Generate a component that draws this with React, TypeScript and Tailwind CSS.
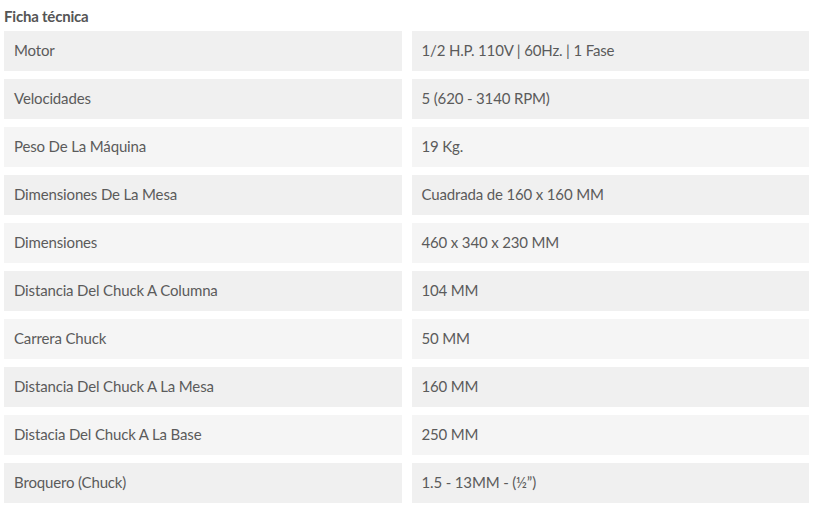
const rows: [string, string][] = [
  ["Motor", "1/2 H.P. 110V | 60Hz. | 1 Fase"],
  ["Velocidades", "5 (620 - 3140 RPM)"],
  ["Peso De La Máquina", "19 Kg."],
  ["Dimensiones De La Mesa", "Cuadrada de 160 x 160 MM"],
  ["Dimensiones", "460 x 340 x 230 MM"],
  ["Distancia Del Chuck A Columna", "104 MM"],
  ["Carrera Chuck", "50 MM"],
  ["Distancia Del Chuck A La Mesa", "160 MM"],
  ["Distacia Del Chuck A La Base", "250 MM"],
  ["Broquero (Chuck)", "1.5 - 13MM - (½”)"],
];

function App() {
  return (
    <div className="min-h-screen bg-white px-1 text-[15px] text-[#5b5b5b] font-['Lato',sans-serif]">
      <h3 className="h-[31px] pt-[5px] text-[15px] font-bold leading-[22px] text-[#555] tracking-[-0.2px]">
        Ficha técnica
      </h3>
      <div className="grid grid-cols-2 gap-x-[10px] gap-y-2 tracking-[-0.15px]">
        {rows.map(([label, value], i) => {
          const bg = i === 0 || i % 2 === 1 ? "bg-[#f0f0f0]" : "bg-[#f5f5f5]";
          return (
            <div key={label} className="contents">
              <div className={`${bg} flex h-10 items-center px-[10px] pb-[2px]`}>{label}</div>
              <div className={`${bg} flex h-10 items-center px-[10px] pb-[2px]`}>{value}</div>
            </div>
          );
        })}
      </div>
    </div>
  );
}

export default App;
